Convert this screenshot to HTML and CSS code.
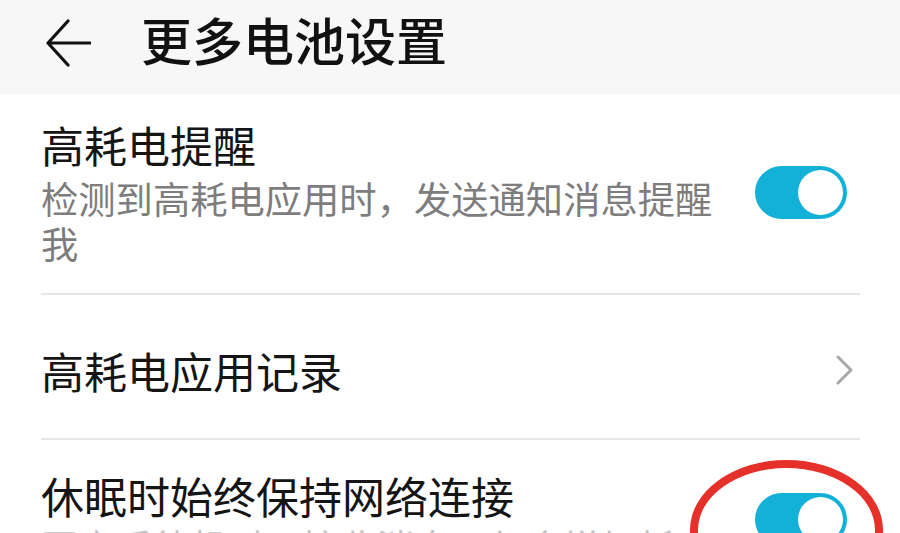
FILE: index.html
```html
<!DOCTYPE html>
<html>
	<head>
		<meta charset="utf-8">
		<link rel="stylesheet" href="styles.css">
	</head>
	<body>
		<div class="topbar">
			<svg class="back" width="46" height="50" viewBox="0 0 46 50">
				<path d="M23 3 L3 25 L23 47 M3 25 L45 25" fill="none" stroke="#111" stroke-width="3.2" stroke-linecap="round" stroke-linejoin="round"/>
			</svg>
			<h1>更多电池设置</h1>
		</div>

		<div class="list">
			<div class="row first">
				<div class="text">
					<div class="title">高耗电提醒</div>
					<div class="sub">检测到高耗电应用时，发送通知消息提醒我</div>
				</div>
				<div class="toggle"><span class="knob"></span></div>
			</div>

			<div class="row middle">
				<div class="text">
					<div class="title">高耗电应用记录</div>
				</div>
				<svg class="chevron" width="18" height="30" viewBox="0 0 18 30">
					<path d="M2 2 L15 15 L2 28" fill="none" stroke="#a8a8a8" stroke-width="3" stroke-linecap="round" stroke-linejoin="round"/>
				</svg>
			</div>

			<div class="row last">
				<div class="text">
					<div class="title">休眠时始终保持网络连接</div>
					<div class="sub">开启后待机时可接收消息，但会增加耗电</div>
				</div>
				<div class="toggle marked">
					<span class="knob"></span>
					<span class="circle"></span>
				</div>
			</div>
		</div>
	</body>
</html>
```

FILE: styles.css
```css
body {
	margin: 0;
	background-color: #fff;
	font-family: "Noto Sans CJK SC", "Noto Sans", sans-serif;
	overflow: hidden;
	height: 533px;
}

.topbar {
	height: 94px;
	background-color: #f7f7f7;
	display: flex;
	align-items: center;
	padding-left: 45px;
	box-sizing: border-box;
	padding-bottom: 16px;
}
.back {
	display: block;
	margin-top: 8px;
}
h1 {
	margin: 0 0 0 50px;
	font-size: 51px;
	font-weight: 500;
	color: #111;
	line-height: 1;
}

.list {
	padding: 0 40px 0 41px;
}
.row {
	display: flex;
	align-items: center;
	border-bottom: 2px solid #e6e6e6;
}
.row.first {
	height: 201px;
	padding-bottom: 2px;
	box-sizing: border-box;
}
.row.middle {
	height: 145px;
	box-sizing: border-box;
	padding-top: 6px;
}
.row.last {
	border-bottom: 0;
	align-items: flex-start;
	padding-top: 30px;
}
.text {
	flex: 1;
	margin-right: 30px;
}
.title {
	font-size: 43px;
	color: #151515;
	line-height: 50px;
}
.sub {
	font-size: 37.3px;
	color: #7d7d7d;
	line-height: 45px;
	margin-top: 7px;
}
.last .sub {
	color: #c4c4c4;
	margin-top: 4px;
}

.toggle {
	position: relative;
	width: 92px;
	height: 53px;
	border-radius: 27px;
	background-color: #13b1d8;
	margin-right: 13px;
	flex-shrink: 0;
}
.knob {
	position: absolute;
	right: 4px;
	top: 4px;
	width: 45px;
	height: 45px;
	border-radius: 50%;
	background-color: #fff;
}
.toggle.marked {
	margin-top: 23px;
}
.circle {
	position: absolute;
	left: -65px;
	top: -33px;
	width: 177px;
	height: 124px;
	border: 8px solid #e6302a;
	border-radius: 50%;
}

.chevron {
	margin-right: 6px;
	margin-top: 0;
}
```
